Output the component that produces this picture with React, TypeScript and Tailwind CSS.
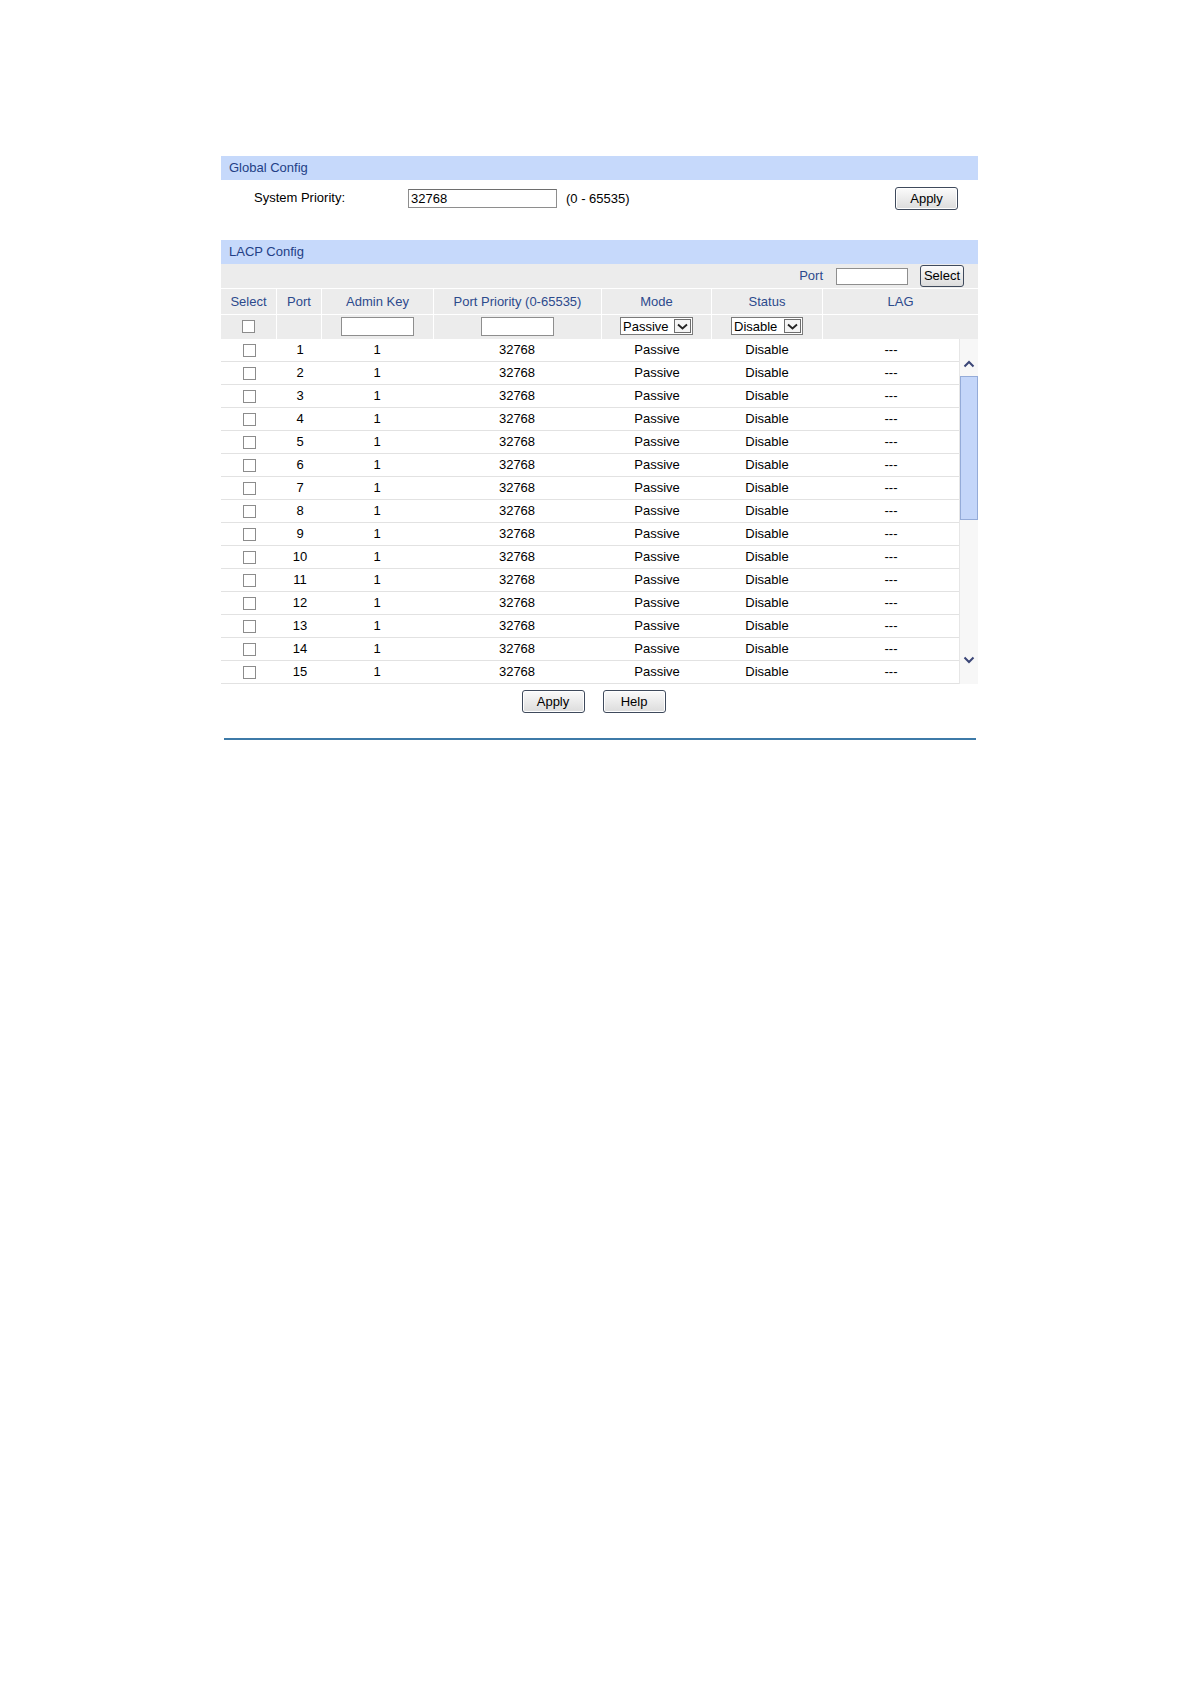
import React from "react";

const F = { fontFamily: '"Liberation Sans", Arial, sans-serif' };

function Btn({ label, w }: { label: string; w: string }) {
  return (
    <div
      className={`${w} h-[23px] flex items-center justify-center rounded-[3px] border border-[#3f4a5c] bg-gradient-to-b from-[#fbfbfb] to-[#dcdcdc] text-[13px] text-black shadow-[inset_0_0_0_1px_#ffffff]`}
    >
      {label}
    </div>
  );
}

function Box() {
  return <div className="w-[13px] h-[13px] border border-[#8c8c8c] bg-white" />;
}

function Chevron({ up }: { up?: boolean }) {
  return (
    <svg width="12" height="8" viewBox="0 0 12 8">
      <path
        d={up ? "M1.5 6.5 L6 2 L10.5 6.5" : "M1.5 1.5 L6 6 L10.5 1.5"}
        fill="none"
        stroke="#3b4677"
        strokeWidth="2"
      />
    </svg>
  );
}

function Sel({ label, w }: { label: string; w: string }) {
  return (
    <div className={`${w} h-[18px] flex items-center border border-[#7a7a7a] bg-white`}>
      <span className="flex-1 pl-[2px] text-[13px] leading-none text-black">{label}</span>
      <div className="w-[17px] h-[14px] mr-[1px] border border-[#6d6d6d] flex items-center justify-center bg-[#f4f4f4]">
        <svg width="11" height="7" viewBox="0 0 11 7">
          <path d="M1 1.5 L5.5 5.5 L10 1.5" fill="none" stroke="#222" strokeWidth="1.8" />
        </svg>
      </div>
    </div>
  );
}

const headers = ["Select", "Port", "Admin Key", "Port Priority (0-65535)", "Mode", "Status", "LAG"];

export default function App() {
  const rows = Array.from({ length: 15 }, (_, i) => i + 1);
  return (
    <div style={F} className="w-[1191px] min-h-[1684px] bg-white pt-[156px] pl-[221px]">
      <div className="w-[757px]">
        {/* Global Config */}
        <div className="h-[24px] bg-[#c6d9fb] flex items-center pl-[8px] text-[13px] text-[#233f86]">
          Global Config
        </div>
        <div className="h-[37px] flex items-center text-[13px] text-black">
          <span className="ml-[33px] w-[154px] -mt-[2px]">System Priority:</span>
          <div className="w-[149px] h-[19px] border border-[#8e8e8e] border-t-[#6e6e6e] bg-white flex items-center pl-[2px]">
            32768
          </div>
          <span className="ml-[9px]">(0 - 65535)</span>
          <div className="ml-auto mr-[20px]">
            <Btn label="Apply" w="w-[63px]" />
          </div>
        </div>

        {/* LACP Config */}
        <div className="mt-[23px] h-[24px] bg-[#c6d9fb] flex items-center pl-[8px] text-[13px] text-[#233f86]">
          LACP Config
        </div>
        <div className="h-[24px] bg-[#ececec] flex items-center justify-end text-[13px] text-[#2c4a8c]">
          <span>Port</span>
          <div className="ml-[13px] w-[72px] h-[17px] border border-[#8e8e8e] bg-white" />
          <div className="ml-[12px] mr-[14px] w-[44px] h-[22px] flex items-center justify-center rounded-[3px] border border-[#3f4a5c] bg-gradient-to-b from-[#fbfbfb] to-[#dcdcdc] text-[13px] text-black">
            Select
          </div>
        </div>
        <div className="grid grid-cols-[56px_45px_112px_168px_110px_111px_155px] bg-[#ececec] border-t border-white text-[13px] text-[#2c4a8c]">
          {headers.map((h, i) => (
            <div
              key={h}
              className={`h-[25px] flex items-center justify-center ${i < 6 ? "border-r border-white" : ""}`}
            >
              {h}
            </div>
          ))}
        </div>
        <div className="grid grid-cols-[56px_45px_112px_168px_110px_111px_155px] bg-[#ececec] border-t border-white">
          <div className="h-[24px] pb-[2px] flex items-center justify-center border-r border-white">
            <Box />
          </div>
          <div className="border-r border-white" />
          <div className="pb-[2px] flex items-center justify-center border-r border-white">
            <div className="w-[73px] h-[19px] border border-[#8e8e8e] bg-white" />
          </div>
          <div className="pb-[2px] flex items-center justify-center border-r border-white">
            <div className="w-[73px] h-[19px] border border-[#8e8e8e] bg-white" />
          </div>
          <div className="pb-[2px] flex items-center justify-center border-r border-white">
            <Sel label="Passive" w="w-[73px]" />
          </div>
          <div className="pb-[2px] flex items-center justify-center border-r border-white">
            <Sel label="Disable" w="w-[72px]" />
          </div>
          <div />
        </div>

        {/* Data rows with scrollbar */}
        <div className="flex">
          <div className="w-[738px]">
            {rows.map((n) => (
              <div
                key={n}
                className="grid grid-cols-[56px_46px_108px_172px_108px_112px_136px] h-[23px] border-b border-[#e2e2e2] bg-white text-[13px] text-black items-center text-center"
              >
                <div className="flex justify-center">
                  <Box />
                </div>
                <div>{n}</div>
                <div>1</div>
                <div>32768</div>
                <div>Passive</div>
                <div>Disable</div>
                <div>---</div>
              </div>
            ))}
          </div>
          <div className="w-[19px] bg-[#f7f7f7] border-l border-[#e6e6e6] flex flex-col items-center">
            <div className="h-[37px] flex items-center justify-center pt-[12px]">
              <Chevron up />
            </div>
            <div className="w-[18px] h-[144px] bg-[#c4d6f9] border border-[#94abd8]" />
            <div className="flex-1" />
            <div className="h-[38px] flex items-start justify-center pt-[10px]">
              <Chevron />
            </div>
          </div>
        </div>

        <div className="flex justify-center gap-[18px] mt-[6px] pr-[12px]">
          <Btn label="Apply" w="w-[63px]" />
          <Btn label="Help" w="w-[63px]" />
        </div>

        <div className="mt-[25px] ml-[3px] w-[752px] h-[2px] bg-[#3d7aa8]" />
      </div>
    </div>
  );
}
